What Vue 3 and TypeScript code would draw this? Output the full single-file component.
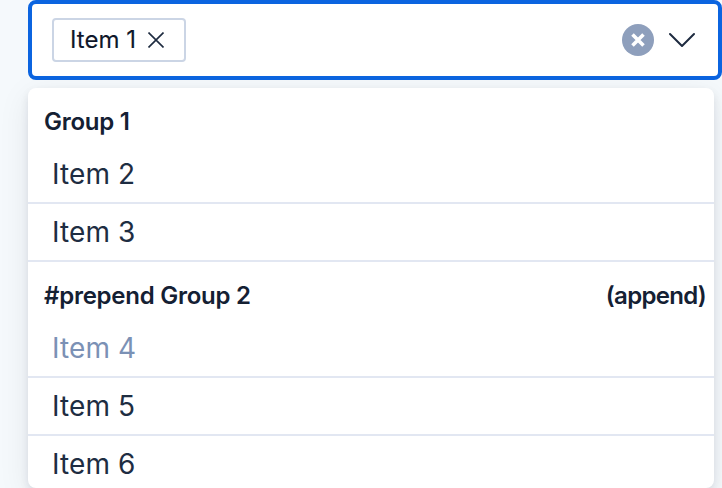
<script setup lang="ts">
interface Option { label: string; disabled?: boolean }
interface Group { label: string; prepend?: string; append?: string; options: Option[] }

const selected: string[] = ['Item 1']
const groups: Group[] = [
  { label: 'Group 1', options: [{ label: 'Item 2' }, { label: 'Item 3' }] },
  {
    label: 'Group 2',
    prepend: '#prepend',
    append: '(append)',
    options: [{ label: 'Item 4', disabled: true }, { label: 'Item 5' }, { label: 'Item 6' }],
  },
]
</script>

<template>
  <div class="page">
    <div class="field">
      <div class="chips">
        <div v-for="item in selected" :key="item" class="chip">
          <span class="chip-label">{{ item }}</span>
          <svg class="chip-close" viewBox="0 0 16 16"><path d="M.5.5l15 15M15.500.5l-15 15" /></svg>
        </div>
      </div>
      <svg class="clear" viewBox="0 0 32 32">
        <circle cx="16" cy="16" r="16" />
        <path d="M10.500 10.500l11 11M21.500 10.500l-11 11" />
      </svg>
      <svg class="chevron" viewBox="0 0 26 16"><path d="M1 2l12 12 12-12" /></svg>
    </div>
    <div class="menu">
      <section v-for="group in groups" :key="group.label" class="group">
        <header class="group-title">
          <span>{{ group.prepend ? group.prepend + ' ' : '' }}{{ group.label }}</span>
          <span v-if="group.append" class="append">{{ group.append }}</span>
        </header>
        <div v-for="option in group.options" :key="option.label" class="option" :class="{ disabled: option.disabled }">
          {{ option.label }}
        </div>
      </section>
    </div>
  </div>
</template>

<style>
body { background: #f5f9fc; }
</style>

<style scoped>
.page {
  box-sizing: border-box;
  height: 488px;
  padding-left: 28px;
  overflow: hidden;
  background: #f5f9fc;
  color: #1e2d42;
  font-family: Inter, sans-serif;
}
.field {
  box-sizing: border-box;
  height: 80px;
  display: flex;
  align-items: center;
  padding: 0 23px 0 20px;
  border: 4px solid #0b64e0;
  border-radius: 8px;
  background: #fff;
}
.chips { flex: 1; display: flex; }
.chip {
  box-sizing: border-box;
  width: 134px;
  height: 44px;
  display: flex;
  align-items: center;
  padding-left: 16px;
  border: 2px solid #cbd5e5;
  border-radius: 4px;
}
.chip-label {
  width: 78px;
  font-size: 24px;
  line-height: 40px;
  color: #0f172a;
  -webkit-text-stroke: 0.12px #0f172a;
  white-space: nowrap;
}
.chip-close { width: 16px; height: 16px; fill: none; stroke: #1e2b40; stroke-width: 1.6; }
.clear { width: 32px; height: 32px; margin-right: 15px; }
.clear circle { fill: #8e9fbc; }
.clear path { stroke: #fff; stroke-width: 3.6; }
.chevron { width: 26px; height: 16px; fill: none; stroke: #1e2b40; stroke-width: 2; stroke-linecap: round; stroke-linejoin: round; }
.menu {
  width: 686px;
  height: 400px;
  margin-top: 8px;
  border-radius: 8px;
  background: #fff;
  box-shadow: 0 4px 8px rgba(15, 23, 42, 0.09), 0 8px 32px rgba(15, 23, 42, 0.08);
}
.group-title {
  box-sizing: border-box;
  height: 58px;
  display: flex;
  justify-content: space-between;
  padding: 14px 8px 0 16px;
  font-size: 24px;
  font-weight: 600;
  line-height: 40px;
  letter-spacing: -0.25px;
  color: #142033;
}
.append { letter-spacing: -0.7px; }
.option {
  box-sizing: border-box;
  height: 58px;
  padding-left: 24px;
  border-bottom: 2px solid #e2e7f2;
  font-size: 28px;
  line-height: 57px;
  letter-spacing: 0.1px;
}
.option.disabled { color: #7b91b5; }
.group:last-child .option:last-child { height: 52px; border-bottom: 0; }
</style>
